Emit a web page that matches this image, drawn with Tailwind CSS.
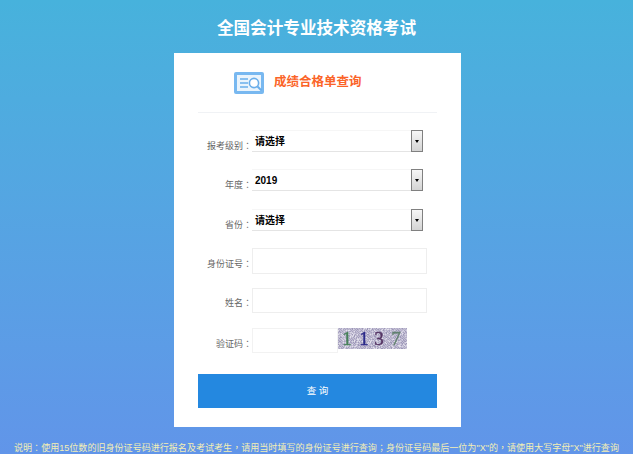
<!DOCTYPE html>
<html lang="zh-CN">
<head>
  <meta charset="UTF-8" />
  <title>全国会计专业技术资格考试</title>
  <script src="https://cdn.jsdelivr.net/npm/@tailwindcss/browser@4"></script>
</head>
<body class="h-[454px] w-[633px] overflow-hidden bg-gradient-to-b from-[#47b2dc] to-[#6195e9] font-['Liberation_Sans','Noto_Sans_CJK_SC',sans-serif]">

  <!-- Title -->
  <h1 class="h-[53px] pt-[17px] text-center text-[16.6px] leading-[24px] font-bold text-white">全国会计专业技术资格考试</h1>

  <!-- Card -->
  <div class="ml-[174px] h-[374px] w-[287px] bg-white px-[24px]">
    <div class="flex h-[60px] items-center border-b border-[#f0f2f5] pl-[36px]">
      <svg class="h-[22px] w-[30px]" viewBox="0 0 30 22">
        <rect x="0" y="0" width="30" height="22" rx="2" fill="#78b8f0" />
        <rect x="3" y="3" width="24" height="16" fill="#eaf4fc" />
        <path d="M6 7h8M6 11h8M6 15h8" stroke="#6aaeea" stroke-width="1.6" />
        <circle cx="20" cy="11" r="4.6" fill="#fff" stroke="#6aaeea" stroke-width="1.6" />
        <path d="M23.5 14.5l4 4" stroke="#6aaeea" stroke-width="2" />
      </svg>
      <span class="ml-[10px] text-[12.5px] font-bold text-[#fb6428]">成绩合格单查询</span>
    </div>

    <form class="pt-[17px]">
      <div class="flex h-[22px] items-center">
        <label class="w-[54px] pt-[10px] text-right text-[9px] whitespace-nowrap text-[#666]">报考级别<span lang="zh-Hant" class="font-['Noto_Sans_CJK_TC']">：</span></label>
        <div class="flex h-[22px] w-[171px] items-center justify-between border-y border-t-[#f6f6f6] border-b-[#e4e4e4] pl-[3px] text-[10px] font-bold text-black">
          请选择
          <span class="flex h-[22px] w-[12px] items-center justify-center border border-[#808080] bg-gradient-to-b from-[#f6f6f6] to-[#d4d4d4]"><span class="border-x-[2.5px] border-t-[3px] border-x-transparent border-t-black"></span></span>
        </div>
      </div>
      <div class="mt-[17px] flex h-[22px] items-center">
        <label class="w-[54px] pt-[10px] text-right text-[9px] whitespace-nowrap text-[#666]">年度<span lang="zh-Hant" class="font-['Noto_Sans_CJK_TC']">：</span></label>
        <div class="flex h-[22px] w-[171px] items-center justify-between border-y border-t-[#f6f6f6] border-b-[#e4e4e4] pl-[3px] text-[10px] font-bold text-black">
          2019
          <span class="flex h-[22px] w-[12px] items-center justify-center border border-[#808080] bg-gradient-to-b from-[#f6f6f6] to-[#d4d4d4]"><span class="border-x-[2.5px] border-t-[3px] border-x-transparent border-t-black"></span></span>
        </div>
      </div>
      <div class="mt-[18px] flex h-[22px] items-center">
        <label class="w-[54px] pt-[10px] text-right text-[9px] whitespace-nowrap text-[#666]">省份<span lang="zh-Hant" class="font-['Noto_Sans_CJK_TC']">：</span></label>
        <div class="flex h-[22px] w-[171px] items-center justify-between border-y border-t-[#f6f6f6] border-b-[#e4e4e4] pl-[3px] text-[10px] font-bold text-black">
          请选择
          <span class="flex h-[22px] w-[12px] items-center justify-center border border-[#808080] bg-gradient-to-b from-[#f6f6f6] to-[#d4d4d4]"><span class="border-x-[2.5px] border-t-[3px] border-x-transparent border-t-black"></span></span>
        </div>
      </div>
      <div class="mt-[17px] flex h-[26px] items-center">
        <label class="w-[54px] pt-[6px] text-right text-[9px] whitespace-nowrap text-[#666]">身份证号<span lang="zh-Hant" class="font-['Noto_Sans_CJK_TC']">：</span></label>
        <input class="h-[26px] w-[175px] border border-[#eeeeee] bg-white" />
      </div>
      <div class="mt-[14px] flex h-[25px] items-center">
        <label class="w-[54px] pt-[6px] text-right text-[9px] whitespace-nowrap text-[#666]">姓名<span lang="zh-Hant" class="font-['Noto_Sans_CJK_TC']">：</span></label>
        <input class="h-[25px] w-[175px] border border-[#eeeeee] bg-white" />
      </div>
      <div class="mt-[15px] flex h-[25px] items-start">
        <label class="w-[54px] pt-[9px] text-right text-[9px] whitespace-nowrap text-[#666]">验证码<span lang="zh-Hant" class="font-['Noto_Sans_CJK_TC']">：</span></label>
        <input class="h-[25px] w-[86px] border border-[#f2f2f2] bg-white" />
        <svg id="captcha" class="h-[21px] w-[69px]" viewBox="0 0 69 21">
          <defs>
            <filter id="soft"><feGaussianBlur stdDeviation="0.3" /></filter>
          </defs>
          <rect width="69" height="21" fill="#c4c0d6" />
          <g id="grain"></g>
          <g font-family="Liberation Serif" font-size="19" text-anchor="middle" filter="url(#soft)" stroke-width="0.4">
            <text x="9" y="17" fill="#47805a" stroke="#47805a">1</text>
            <text x="26" y="17" fill="#2c2a8a" stroke="#2c2a8a">1</text>
            <text x="41" y="17" fill="#553463" stroke="#553463">3</text>
            <text x="58" y="17" fill="#62806f" stroke="#62806f">7</text>
          </g>
        </svg>
      </div>
      <button type="button" class="mt-[21px] h-[34px] w-[239px] bg-[#2488e0] text-[9.5px] text-white">查 询</button>
    </form>
  </div>

  <!-- Note -->
  <p class="mt-[14px] text-center text-[9.05px] leading-[14px] whitespace-nowrap text-[#f3efb4]">说明<span lang="zh-Hant" class="font-['Noto_Sans_CJK_TC']">：</span>使用15位数的旧身份证号码进行报名及考试考生<span lang="zh-Hant" class="font-['Noto_Sans_CJK_TC']">，</span>请用当时填写的身份证号进行查询<span lang="zh-Hant" class="font-['Noto_Sans_CJK_TC']">；</span>身份证号码最后一位为"X"的<span lang="zh-Hant" class="font-['Noto_Sans_CJK_TC']">，</span>请使用大写字母"X"进行查询</p>

  <script>
    // speckle behind the captcha digits
    const grain = document.getElementById('grain');
    const shades = ['#a8a3c0', '#b6b1ca', '#d6d3e2', '#e2e0ea', '#9d98b8'];
    let seed = 7;
    let dots = '';
    for (let y = 0; y < 21; y++) {
      for (let x = 0; x < 69; x++) {
        seed = (seed * 9301 + 49297) % 233280;
        if (seed % 5 < 3) {
          dots += `<rect x="${x}" y="${y}" width="1" height="1" fill="${shades[seed % 7 % 5]}"></rect>`;
        }
      }
    }
    grain.innerHTML = dots;
  </script>
</body>
</html>
